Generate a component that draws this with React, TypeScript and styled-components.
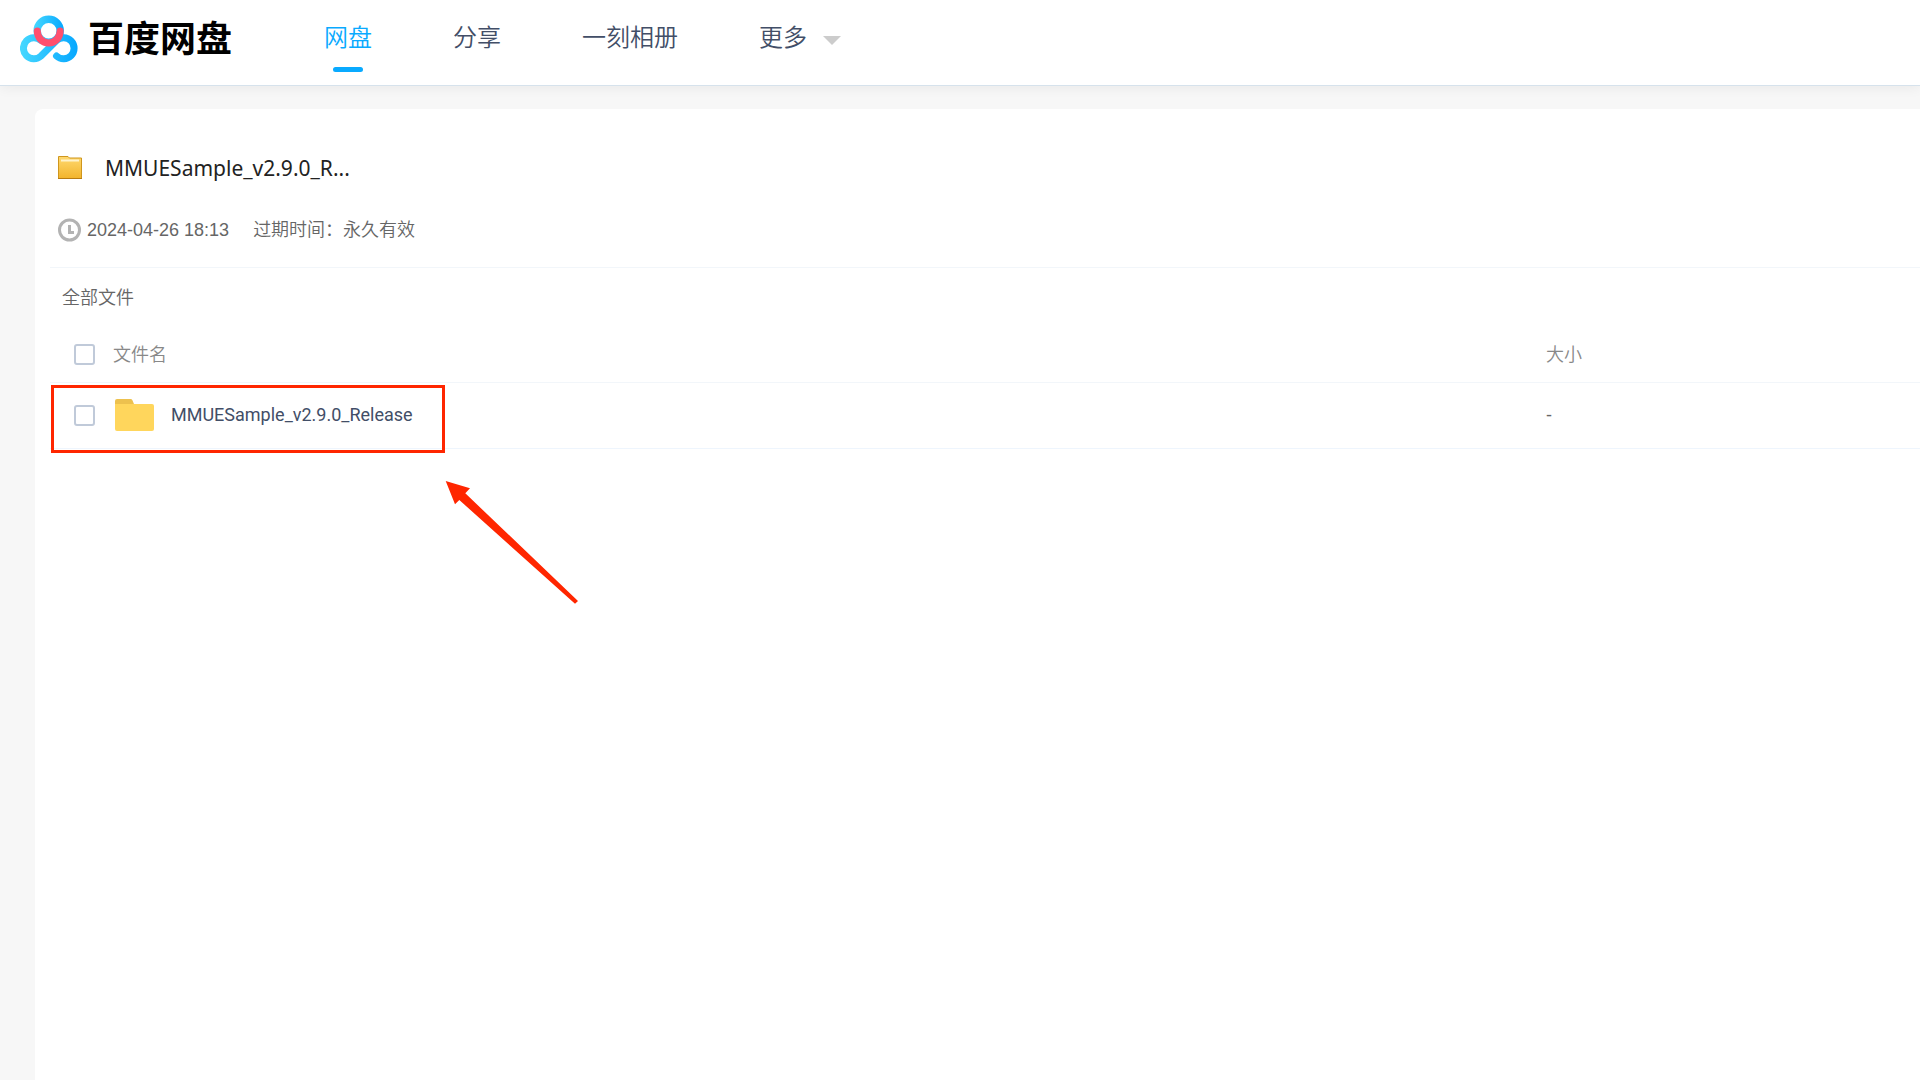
import React from "react";
import styled, { createGlobalStyle, css } from "styled-components";

const GlobalStyle = createGlobalStyle`
  * { box-sizing: border-box; }
  body {
    margin: 0;
    background: #f7f7f7;
    color: #666;
    font: 18px/24px "Liberation Sans", "Noto Sans CJK SC", sans-serif;
  }
`;

const Header = styled.header`
  position: relative;
  display: flex;
  align-items: center;
  height: 86px;
  padding: 0 20px 14px;
  background: #fff;
  border-bottom: 1px solid #d6e2ec;
  box-shadow: 0 2px 12px rgba(0, 0, 0, 0.06);
`;

const Brand = styled.a`
  display: flex;
  align-items: center;
  gap: 10px;
  color: #000;
  font: 700 36px/48px "Noto Sans CJK SC", sans-serif;
  text-decoration: none;

  svg {
    margin-top: 6px;
  }
`;

const Nav = styled.nav`
  display: flex;
  gap: 81px;
  margin-left: 92px;
`;

const navText = css`
  color: #424e67;
  font: 350 24px/36px "Noto Sans CJK SC", sans-serif;
`;

const NavLink = styled.a<{ $active?: boolean }>`
  ${navText}
  position: relative;
  text-decoration: none;
  ${(p) =>
    p.$active &&
    css`
      color: #09aaff;
      &::after {
        content: "";
        position: absolute;
        left: 50%;
        bottom: -18px;
        width: 30px;
        height: 5px;
        margin-left: -15px;
        border-radius: 3px;
        background: #09aaff;
      }
    `}
`;

const MoreButton = styled.button`
  ${navText}
  display: flex;
  align-items: center;
  gap: 16px;
  padding: 0;
  border: 0;
  background: none;
  &::after {
    content: "";
    margin-top: 10px;
    border: 9px solid transparent;
    border-top-color: #ccc;
    border-bottom: 0;
  }
`;

const Card = styled.main`
  min-height: calc(100vh - 109px);
  margin: 23px 0 0 35px;
  padding-left: 15px;
  background: #fff;
  border-top-left-radius: 8px;
`;

const ShareInfo = styled.section`
  padding: 43px 8px 25px;
  border-bottom: 1px solid #f2f6fa;
`;

const TitleRow = styled.div`
  display: flex;
  align-items: center;
  gap: 23px;
`;

const Title = styled.h1`
  margin: 0;
  color: #222;
  font: 400 21px/32px "Noto Sans", sans-serif;
`;

const Meta = styled.div`
  display: flex;
  align-items: center;
  gap: 24px;
  margin-top: 34px;
  font-weight: 350;
`;

const MetaItem = styled.span`
  display: flex;
  align-items: center;
  gap: 5px;
`;

const Crumb = styled.h2`
  margin: 0;
  padding: 18px 12px;
  font-size: 18px;
  font-weight: 350;
`;

const TableArea = styled.div`
  position: relative;
`;

const Table = styled.table`
  width: 100%;
  border-collapse: collapse;
  table-layout: fixed;
`;

const HeadCell = styled.th<{ $wide?: boolean }>`
  width: ${(p) => (p.$wide ? "80%" : "20%")};
  height: 54px;
  padding: 0 0 0 ${(p) => (p.$wide ? 24 : 0)}px;
  border-bottom: 1px solid #f2f6fa;
  color: #888;
  font-weight: 350;
  text-align: left;
`;

const Cell = styled.td<{ $wide?: boolean }>`
  height: 66px;
  padding: 0 0 0 ${(p) => (p.$wide ? 24 : 0)}px;
  border-bottom: 1px solid #eef5fd;
`;

const NameLine = styled.div`
  display: flex;
  align-items: center;
  gap: 18px;
`;

const Checkbox = styled.input`
  appearance: none;
  flex: none;
  width: 21px;
  height: 21px;
  margin: 0;
  border: 2px solid #c0cad9;
  border-radius: 3px;
  background: #fff;
`;

const FileLink = styled.a`
  display: flex;
  align-items: center;
  gap: 17px;
  padding-left: 2px;
  color: #424e67;
  font: 18px/24px Roboto, sans-serif;
  text-decoration: none;
`;

const Highlight = styled.div`
  position: absolute;
  top: 57px;
  left: 1px;
  width: 394px;
  height: 68px;
  border: 3px solid #ff2600;
  pointer-events: none;
`;

const Arrow = styled.svg`
  position: absolute;
  top: 153px;
  left: 395px;
  pointer-events: none;
`;

const Logo = () => (
  <svg width="58" height="48" viewBox="0 0 58 48" fill="none" aria-hidden="true">
    <defs>
      <linearGradient id="blue" gradientUnits="userSpaceOnUse" x1="0" y1="0" x2="58" y2="0">
        <stop offset="0" stopColor="#46d8ff" />
        <stop offset="1" stopColor="#06a7ff" />
      </linearGradient>
      <linearGradient id="blueTop" gradientUnits="userSpaceOnUse" x1="14" y1="0" x2="44" y2="0">
        <stop offset="0" stopColor="#46d8ff" />
        <stop offset="1" stopColor="#06a7ff" />
      </linearGradient>
    </defs>
    <path
      d="M36.500 41A10.500 10.500 0 1 0 36.500 25.500L21 41A10.500 10.500 0 1 1 21 25.500"
      stroke="url(#blue)"
      strokeWidth="7"
      strokeLinecap="round"
    />
    <circle cx="28.700" cy="15.700" r="11.500" stroke="url(#blueTop)" strokeWidth="7.400" />
    <path d="M17.300 16a11.400 12 0 0 0 22.800 0" stroke="#ff4f6e" strokeWidth="7" strokeLinecap="round" />
  </svg>
);

const SmallFolder = () => (
  <svg width="24" height="24" viewBox="0 0 24 24" aria-hidden="true">
    <defs>
      <linearGradient id="gold" x1="0" y1="0" x2="0" y2="1">
        <stop offset="0" stopColor="#ffd970" />
        <stop offset="1" stopColor="#f2b42c" />
      </linearGradient>
    </defs>
    <path d="M.5 22.500V.5H10l1.500 1.500h12v20.500z" fill="url(#gold)" stroke="#cf961d" />
    <path d="M3 4.500h18" stroke="#fff3cc" strokeWidth="2" />
    <path d="M0 22.500h24" stroke="#b87c12" />
  </svg>
);

const Clock = () => (
  <svg width="24" height="24" viewBox="0 0 24 24" fill="none" stroke="#b3b3b3" aria-hidden="true">
    <circle cx="11.500" cy="12" r="10" strokeWidth="3" />
    <path d="M11.500 7v7.500H16" strokeWidth="3" />
  </svg>
);

const Folder = () => (
  <svg width="39" height="32" viewBox="0 0 39 32" aria-hidden="true">
    <path d="M0 8V2a2 2 0 0 1 2-2h13.500a2 2 0 0 1 1.800 1L19 5v3z" fill="#edc14e" />
    <path d="M0 5h37a2 2 0 0 1 2 2v23a2 2 0 0 1-2 2H2a2 2 0 0 1-2-2z" fill="#ffd65c" />
  </svg>
);

export default function App() {
  return (
    <>
      <GlobalStyle />
      <Header>
        <Brand href="#">
          <Logo />
          百度网盘
        </Brand>
        <Nav>
          <NavLink href="#" $active>网盘</NavLink>
          <NavLink href="#">分享</NavLink>
          <NavLink href="#">一刻相册</NavLink>
          <MoreButton type="button">更多</MoreButton>
        </Nav>
      </Header>
      <Card>
        <ShareInfo>
          <TitleRow>
            <SmallFolder />
            <Title>MMUESample_v2.9.0_R...</Title>
          </TitleRow>
          <Meta>
            <MetaItem>
              <Clock />
              2024-04-26 18:13
            </MetaItem>
            <MetaItem>过期时间：永久有效</MetaItem>
          </Meta>
        </ShareInfo>
        <Crumb>全部文件</Crumb>
        <TableArea>
          <Table>
            <thead>
              <tr>
                <HeadCell $wide>
                  <NameLine>
                    <Checkbox type="checkbox" id="all" />
                    <label htmlFor="all">文件名</label>
                  </NameLine>
                </HeadCell>
                <HeadCell>大小</HeadCell>
              </tr>
            </thead>
            <tbody>
              <tr>
                <Cell $wide>
                  <NameLine>
                    <Checkbox type="checkbox" aria-label="MMUESample_v2.9.0_Release" />
                    <FileLink href="#">
                      <Folder />
                      MMUESample_v2.9.0_Release
                    </FileLink>
                  </NameLine>
                </Cell>
                <Cell>-</Cell>
              </tr>
            </tbody>
          </Table>
          <Highlight />
          <Arrow width="134" height="124" viewBox="0 0 134 124" aria-hidden="true">
            <path d="M.7 0L25 7.300L20.300 12.300L133 120L130 122.700L14.300 19L10 23.300z" fill="#ff2600" />
          </Arrow>
        </TableArea>
      </Card>
    </>
  );
}
